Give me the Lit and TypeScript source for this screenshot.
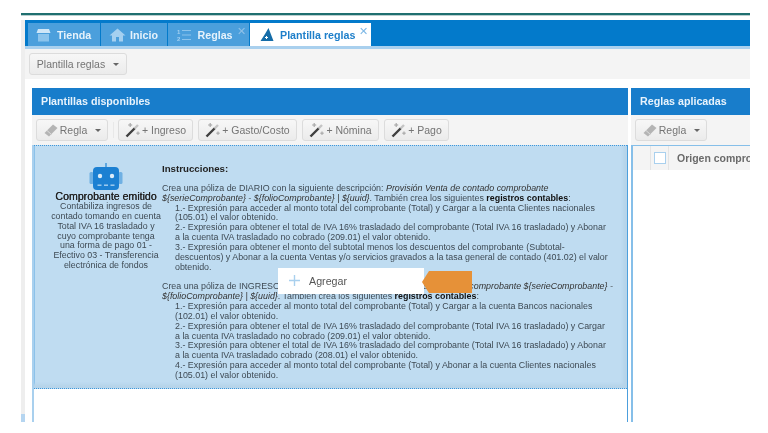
import { LitElement, html, css, svg } from "lit";
import { customElement } from "lit/decorators.js";

const wand = svg`<svg width="16" height="16" viewBox="0 0 16 16"><path d="M1.5 14.5 L10 6" stroke="#3f3f3f" stroke-width="2.4"/><path d="M9.5 6.5 L13 3" stroke="#c4c4c4" stroke-width="2.4"/><g fill="#aaa"><rect x="4.6" y="1" width="1.2" height="4"/><rect x="3.2" y="2.4" width="4" height="1.2"/><rect x="12.4" y="9.5" width="1.2" height="3.4"/><rect x="11.3" y="10.6" width="3.4" height="1.2"/></g></svg>`;
const eraser = svg`<svg width="16" height="16" viewBox="0 0 16 16"><path d="M1.5 11 L10 2.5 L14.5 6 L6 14.5 Z" fill="#b4b4b4"/><path d="M4 8.5 L9 13" stroke="#ddd" stroke-width="1"/></svg>`;
const caret = html`<i class="caret"></i>`;

@customElement("app-root")
export class AppRoot extends LitElement {
  static styles = css`
    :host { display: block; width: 768px; height: 433px; background: #fff; overflow: hidden; font-family: "Liberation Sans", Arial, sans-serif; }
    .page { position: relative; margin: 13px 18px 0 21px; height: 409px; filter: blur(0.5px); display: flex; flex-direction: column; }
    .rule { height: 2px; background: #1f6f70; box-shadow: 0 1px 0 #b9cfcf; flex: none; }
    .body { flex: 1; display: flex; margin-top: 5px; min-height: 0; }
    .rail { width: 4px; background: #eeeeee; display: flex; flex-direction: column; justify-content: flex-end; flex: none; }
    .foot { height: 8px; background: #b5d5f0; }
    .main { flex: 1; display: flex; flex-direction: column; background: #f4f4f4; min-width: 0; }
    .tabs { height: 29px; box-sizing: border-box; background: #037acb; border-bottom: 3px solid #a9d0ee; display: flex; align-items: flex-end; padding-left: 3px; gap: 1px; flex: none; }
    .tab { height: 23px; background: #4b9fdc; color: #e6f2fb; font-weight: bold; font-size: 10.7px; display: flex; align-items: center; position: relative; box-sizing: border-box; }
    .tab svg { flex: none; }
    .t1 { width: 72px; padding-left: 8px; gap: 6px; }
    .t2 { width: 66px; padding-left: 8px; gap: 4px; }
    .t3 { width: 81px; padding-left: 9px; gap: 6.5px; }
    .t4 { width: 121px; padding-left: 10px; gap: 6px; background: #fff; color: #1e7fca; }
    .x { position: absolute; top: 2px; right: 3px; font-size: 11px; font-weight: normal; color: #8fc1e8; line-height: 12px; }
    .t4 .x { color: #7db8e6; }
    .bar { height: 30px; display: flex; align-items: center; padding-left: 4px; flex: none; }
    .btn { height: 22px; box-sizing: border-box; border: 1px solid #dcdcdc; border-radius: 3px; background: linear-gradient(#f7f7f7, #ebebeb); color: #747474; font-size: 10.5px; display: flex; align-items: center; justify-content: center; gap: 1px; white-space: nowrap; flex: none; }
    .caret { width: 0; height: 0; border: 3px solid transparent; border-top: 3.5px solid #666; border-bottom: 0; margin-left: 7px; display: block; }
    .plantilla { width: 98px; }
    .content { flex: 1; background: #fff; padding: 9px 0 0 7px; display: flex; gap: 3px; min-height: 0; }
    .left { width: 596px; background: #f4f4f4; display: flex; flex-direction: column; flex: none; }
    .right { flex: 1; background: #f4f4f4; display: flex; flex-direction: column; min-width: 0; overflow: hidden; }
    .phead { height: 27px; box-sizing: border-box; padding: 0 0 1px 9px; background: #187dcb; color: #e8f3fc; font-weight: bold; font-size: 10.7px; display: flex; align-items: center; flex: none; }
    .tools { height: 30px; display: flex; align-items: center; padding-left: 4px; gap: 5px; flex: none; }
    .sep { width: 1px; height: 16px; background: #e8e8e8; margin-right: -1px; flex: none; }
    .regla { width: 72px; }
    .ing { width: 75px; } .gas { width: 99px; } .nom { width: 77px; } .pag { width: 65px; }
    .area { flex: 1; background: #fff; border-left: 2px solid #a9d0ee; border-right: 1px solid #4c9fdd; display: flex; flex-direction: column; min-height: 0; }
    .tpl { height: 244px; box-sizing: border-box; background: #bfdcf1; border-top: 1px dotted #3f97da; border-bottom: 1px dotted #3f97da; box-shadow: inset -4px -4px 3px #b6d4ea, inset 1px 0 0 #8cc2ea; display: flex; flex: none; padding: 16px 0 0 0; position: relative; }
    .card { width: 112px; margin-left: 16px; text-align: center; font-size: 8.85px; line-height: 9.85px; color: #3e4a54; flex: none; display: flex; flex-direction: column; align-items: center; padding-top: 1px; }
    .card b { font-size: 10.6px; font-weight: normal; color: #222; line-height: 11px; white-space: nowrap; text-shadow: 0.2px 0 0 #222; }
    .ins { font-size: 8.9px; line-height: 9.85px; color: #3e4a54; white-space: nowrap; padding-top: 1.7px; }
    .ins .h { font-weight: bold; font-size: 9.7px; color: #222; margin-bottom: 10.3px; display: block; }
    .ins b { color: #111; font-weight: bold; }
    .ins p { margin: 0 0 10px 0; }
    .ins span.l { display: block; }
    .ins span.n { display: block; padding-left: 13px; }
    .ins i { color: #333; }
    .tbl { flex: 1; background: #fff; border-left: 2px solid #86bfe9; display: flex; flex-direction: column; }
    .thead { height: 25px; background: #f4f4f4; border-top: 1px solid #86bfe9; display: flex; align-items: center; flex: none; box-sizing: border-box; }
    .c0 { width: 17px; height: 100%; border-right: 1px solid #e4e4e4; flex: none; }
    .c1 { width: 17px; height: 100%; border-right: 1px solid #e4e4e4; display: flex; align-items: center; justify-content: center; flex: none; }
    .chk { width: 10px; height: 10px; background: #fff; border: 1px solid #a9d0ee; }
    .c2 { padding-left: 8px; font-weight: bold; font-size: 10.5px; color: #6a6a6a; white-space: nowrap; }
    .menu { position: absolute; left: 244px; top: 122px; width: 146px; height: 25.5px; background: #fff; display: flex; align-items: center; color: #555; font-size: 10.7px; }
    .menu svg { margin: 0 9px 0 11px; }
    .arrow { position: absolute; left: 388px; top: 124.5px; }
    .digit { font-size: 6px; font-weight: bold; fill: #a5d0f0; }
  `;

  render() {
    return html`<div class="page">
      <div class="rule"></div>
      <div class="body">
        <div class="rail"><div class="foot"></div></div>
        <div class="main">
        <div class="tabs">
          <div class="tab t1">
            <svg width="15" height="14" viewBox="0 0 15 14"><path d="M2 1 H13 L14.5 5 H0.5 Z" fill="#cfe6f7"/><path d="M2 6 H13 V13.5 H2 Z" fill="#8cc4ec"/></svg>Tienda
          </div>
          <div class="tab t2">
            <svg width="17" height="14" viewBox="0 0 17 14"><path d="M8.5 0.5 L16.5 7.5 H14 V13.5 H10 V9 H7 V13.5 H3 V7.5 H0.5 Z" fill="#a5d0f0"/></svg>Inicio
          </div>
          <div class="tab t3">
            <svg width="14" height="14" viewBox="0 0 14 14"><g fill="#8cc4ec"><rect x="5" y="2" width="9" height="1"/><rect x="5" y="6.5" width="9" height="1"/><rect x="5" y="11" width="9" height="1"/></g><text class="digit" x="0" y="6">1</text><text class="digit" x="0" y="13">2</text></svg>Reglas<span class="x">✕</span>
          </div>
          <div class="tab t4">
            <svg width="14" height="14" viewBox="0 0 14 14"><path d="M8.5 0 L13.5 13 H0.5 L5 6 Z" fill="#146ca8"/><path d="M6.5 8 v3 M5 9.5 h3" stroke="#fff" stroke-width="1"/></svg>Plantilla reglas<span class="x">✕</span>
          </div>
        </div>
        <div class="bar"><div class="btn plantilla">Plantilla reglas${caret}</div></div>
        <div class="content">
          <div class="left">
            <div class="phead">Plantillas disponibles</div>
            <div class="tools">
              <div class="btn regla">${eraser}Regla${caret}</div>
              <div class="sep"></div>
              <div class="btn ing">${wand}+ Ingreso</div>
              <div class="btn gas">${wand}+ Gasto/Costo</div>
              <div class="btn nom">${wand}+ Nómina</div>
              <div class="btn pag">${wand}+ Pago</div>
            </div>
            <div class="area">
              <div class="tpl">
                <div class="card">
                  <svg width="34" height="28" viewBox="0 0 34 28"><rect x="16" y="0" width="2" height="5" fill="#5fa8e0"/><rect x="0.5" y="9" width="4" height="12" rx="1.5" fill="#6fb0e3"/><rect x="29.5" y="9" width="4" height="12" rx="1.5" fill="#6fb0e3"/><rect x="4" y="4" width="26" height="23" rx="4" fill="#1c80d2"/><circle cx="11" cy="13" r="2.2" fill="#dcecf9"/><circle cx="23" cy="13" r="2.2" fill="#dcecf9"/><rect x="8.5" y="21.5" width="4" height="1.4" fill="#a8d0f0"/><rect x="15" y="21.5" width="4" height="1.4" fill="#a8d0f0"/><rect x="21.5" y="21.5" width="4" height="1.4" fill="#a8d0f0"/></svg>
                  <b>Comprobante emitido</b>
                  Contabiliza ingresos de<br>contado tomando en cuenta<br>Total IVA 16 trasladado y<br>cuyo comprobante tenga<br>una forma de pago 01 -<br>Efectivo 03 - Transferencia<br>electrónica de fondos
                </div>
                <div class="ins">
                  <span class="h">Instrucciones:</span>
                  <p>
                    <span class="l">Crea una póliza de DIARIO con la siguiente descripción: <i>Provisión Venta de contado comprobante</i></span>
                    <span class="l"><i>\${serieComprobante} - \${folioComprobante} | \${uuid}</i>. También crea los siguientes <b>registros contables</b>:</span>
                    <span class="n">1.- Expresión para acceder al monto total del comprobante (Total) y Cargar a la cuenta Clientes nacionales</span>
                    <span class="n">(105.01) el valor obtenido.</span>
                    <span class="n">2.- Expresión para obtener el total de IVA 16% trasladado del comprobante (Total IVA 16 trasladado) y Abonar</span>
                    <span class="n">a la cuenta IVA trasladado no cobrado (209.01) el valor obtenido.</span>
                    <span class="n">3.- Expresión para obtener el monto del subtotal menos los descuentos del comprobante (Subtotal-</span>
                    <span class="n">descuentos) y Abonar a la cuenta Ventas y/o servicios gravados a la tasa general de contado (401.02) el valor</span>
                    <span class="n">obtenido.</span>
                  </p>
                  <p>
                    <span class="l">Crea una póliza de INGRESO con la siguiente descripción: <i>Cobro de contado comprobante \${serieComprobante} -</i></span>
                    <span class="l"><i>\${folioComprobante} | \${uuid}</i>. También crea los siguientes <b>registros contables</b>:</span>
                    <span class="n">1.- Expresión para acceder al monto total del comprobante (Total) y Cargar a la cuenta Bancos nacionales</span>
                    <span class="n">(102.01) el valor obtenido.</span>
                    <span class="n">2.- Expresión para obtener el total de IVA 16% trasladado del comprobante (Total IVA 16 trasladado) y Cargar</span>
                    <span class="n">a la cuenta IVA trasladado no cobrado (209.01) el valor obtenido.</span>
                    <span class="n">3.- Expresión para obtener el total de IVA 16% trasladado del comprobante (Total IVA 16 trasladado) y Abonar</span>
                    <span class="n">a la cuenta IVA trasladado cobrado (208.01) el valor obtenido.</span>
                    <span class="n">4.- Expresión para acceder al monto total del comprobante (Total) y Abonar a la cuenta Clientes nacionales</span>
                    <span class="n">(105.01) el valor obtenido.</span>
                  </p>
                </div>
                <div class="menu">
                  <svg width="11" height="11" viewBox="0 0 11 11"><path d="M5.5 0 V11 M0 5.5 H11" stroke="#a9d0ee" stroke-width="1.4"/></svg>Agregar
                </div>
                <svg class="arrow" width="51" height="22" viewBox="0 0 51 22"><path d="M0 11 L7 0 H50 V22 H7 Z" fill="#e69138"/></svg>
              </div>
            </div>
          </div>
          <div class="right">
            <div class="phead">Reglas aplicadas</div>
            <div class="tools"><div class="btn regla">${eraser}Regla${caret}</div></div>
            <div class="tbl">
              <div class="thead"><div class="c0"></div><div class="c1"><div class="chk"></div></div><div class="c2">Origen comprobante</div></div>
            </div>
          </div>
        </div>
        </div>
      </div>
    </div>`;
  }
}
